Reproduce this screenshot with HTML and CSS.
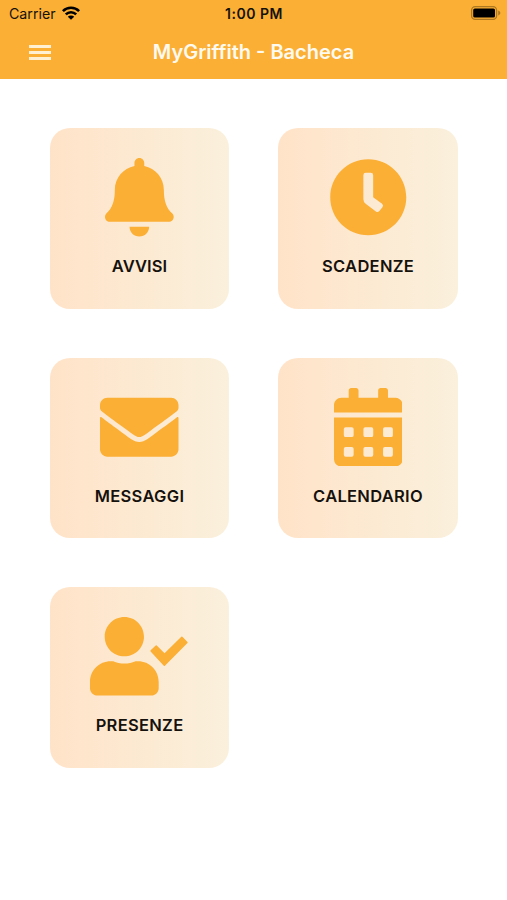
FILE: index.html
```html
<!DOCTYPE html>
<html lang="it">
<head>
<meta charset="utf-8">
<title>MyGriffith - Bacheca</title>
<link rel="stylesheet" href="styles.css">
</head>
<body>
<header class="header">
  <div class="status">
    <div class="carrier">
      <span class="carrier-name">Carrier</span>
      <svg class="wifi" viewBox="0 0 18 14"><g fill="none" stroke="#000" stroke-width="2.6"><path d="M.9 5.1a11.6 11.6 0 0 1 16.2 0"/><path d="M3.8 8.4a7.4 7.4 0 0 1 10.4 0"/></g><path d="M9 13.7 5.8 10.7a4.6 4.6 0 0 1 6.4 0z"/></svg>
    </div>
    <time class="clock">1:00 PM</time>
    <svg class="battery" viewBox="0 0 32 16"><rect x="1.6" y="1.6" width="25" height="12.8" rx="3.6" fill="none" stroke="#ad781f" stroke-width="1.3"/><rect x="3.2" y="3.4" width="21.8" height="9.2" rx="1.6"/><path d="M28.2 5.6c2.8.8 2.8 4 0 4.8z" fill="#ad781f"/></svg>
  </div>
  <div class="toolbar">
    <button class="menu" aria-label="Menu"><span></span><span></span><span></span></button>
    <h1 class="title">MyGriffith - Bacheca</h1>
  </div>
</header>
<main class="grid">
  <a class="card">
    <svg class="icon" viewBox="0 0 448 512"><path d="M224 512c35.32 0 63.97-28.65 63.97-64H160.03c0 35.35 28.65 64 63.97 64zm215.39-149.71c-19.32-20.76-55.47-51.99-55.47-154.29 0-77.7-54.48-139.9-127.94-155.16V32c0-17.67-14.32-32-31.98-32s-31.98 14.33-31.98 32v20.84C118.56 68.1 64.08 130.3 64.08 208c0 102.3-36.15 133.53-55.47 154.29-6 6.45-8.66 14.16-8.61 21.71.11 16.4 12.98 32 32.1 32h383.8c19.12 0 32-15.6 32.1-32 .05-7.55-2.61-15.27-8.61-21.71z"/></svg>
    <span class="label avvisi">AVVISI</span>
  </a>
  <a class="card">
    <svg class="icon" viewBox="0 0 512 512"><path d="M256,8C119,8,8,119,8,256S119,504,256,504,504,393,504,256,393,8,256,8Zm92.49,313h0l-20,25a16,16,0,0,1-22.49,2.5h0l-67-49.72a40,40,0,0,1-15-31.23V112a16,16,0,0,1,16-16h32a16,16,0,0,1,16,16V256l58,42.5A16,16,0,0,1,348.49,321Z"/></svg>
    <span class="label">SCADENZE</span>
  </a>
  <a class="card">
    <svg class="icon" viewBox="0 0 512 512"><path d="M502.3 190.8c3.9-3.1 9.7-.2 9.7 4.7V400c0 26.5-21.5 48-48 48H48c-26.5 0-48-21.5-48-48V195.6c0-5 5.7-7.8 9.7-4.7 22.4 17.4 52.1 39.5 154.1 113.6 21.1 15.4 56.7 47.8 92.2 47.6 35.7.3 72-32.8 92.3-47.6 102-74.1 131.6-96.3 154-113.7zM256 320c23.2.4 56.6-29.2 73.4-41.4 132.7-96.3 142.8-104.7 173.4-128.7 5.8-4.5 9.2-11.5 9.2-18.9v-19c0-26.5-21.5-48-48-48H48c-26.5 0-48 21.5-48 48v19c0 7.4 3.4 14.3 9.2 18.9 30.6 23.9 40.7 32.4 173.4 128.7 16.8 12.2 50.2 41.8 73.4 41.4z"/></svg>
    <span class="label">MESSAGGI</span>
  </a>
  <a class="card">
    <svg class="icon" viewBox="0 0 448 512"><path fill-rule="evenodd" d="M0 464c0 26.5 21.5 48 48 48h352c26.5 0 48-21.5 48-48V192H0zM76 256h40q12 0 12 12v40q0 12-12 12H76q-12 0-12-12v-40q0-12 12-12zm128 0h40q12 0 12 12v40q0 12-12 12h-40q-12 0-12-12v-40q0-12 12-12zm128 0h40q12 0 12 12v40q0 12-12 12h-40q-12 0-12-12v-40q0-12 12-12zM76 384h40q12 0 12 12v40q0 12-12 12H76q-12 0-12-12v-40q0-12 12-12zm128 0h40q12 0 12 12v40q0 12-12 12h-40q-12 0-12-12v-40q0-12 12-12zm128 0h40q12 0 12 12v40q0 12-12 12h-40q-12 0-12-12v-40q0-12 12-12zM400 64h-48V16c0-8.8-7.2-16-16-16h-32c-8.8 0-16 7.2-16 16v48H160V16c0-8.8-7.2-16-16-16h-32c-8.8 0-16 7.2-16 16v48H48C21.5 64 0 85.5 0 112v48h448v-48c0-26.5-21.5-48-48-48z"/></svg>
    <span class="label">CALENDARIO</span>
  </a>
  <a class="card">
    <svg class="icon" viewBox="0 0 640 512"><path d="M224 256c70.7 0 128-57.3 128-128S294.7 0 224 0 96 57.3 96 128s57.3 128 128 128zm89.6 32h-16.7c-22.2 10.2-46.9 16-72.9 16s-50.6-5.8-72.9-16h-16.7C60.2 288 0 348.2 0 422.4V464c0 26.5 21.5 48 48 48h352c26.5 0 48-21.5 48-48v-41.6c0-74.2-60.2-134.4-134.4-134.4z"/><path class="tick" d="M399 221l33-31 54 54 113-112 33 34-147 148z"/></svg>
    <span class="label">PRESENZE</span>
  </a>
</main>
</body>
</html>
```
FILE: styles.css
```css
* {
  box-sizing: border-box;
}

body {
  margin: 0;
  min-height: 900px;
  background: #fff;
  color: #15110d;
  font-family: Inter, "Liberation Sans", sans-serif;
}

.header {
  height: 79px;
  background: #fbaf35;
}

.status {
  display: grid;
  grid-template-columns: 1fr auto 1fr;
  align-items: center;
  height: 26px;
  padding: 0 5px 0 9px;
}

.carrier {
  display: flex;
  align-items: center;
  gap: 6px;
  font-size: 14.2px;
}

.wifi {
  width: 18px;
  height: 14px;
}

.clock {
  margin-left: -3px;
  font-size: 14px;
  font-weight: 600;
  letter-spacing: 0.5px;
}

.battery {
  justify-self: end;
  width: 32px;
  height: 16px;
}

.toolbar {
  display: grid;
  grid-template-columns: 80px 1fr 80px;
  align-items: center;
  height: 52px;
}

.menu {
  display: flex;
  flex-direction: column;
  gap: 3px;
  width: 22px;
  margin-left: 29px;
  padding: 0;
  border: 0;
  background: none;
}

.menu span {
  height: 3px;
  background: #ffefd3;
}

.title {
  margin: 0;
  color: #fffaf0;
  font-size: 20px;
  font-weight: 600;
  text-align: center;
  white-space: nowrap;
}

.grid {
  display: grid;
  grid-template-columns: 179.5px 179.5px;
  gap: 49px;
  padding: 49px 0 0 49.8px;
}

.card {
  display: flex;
  flex-direction: column;
  align-items: center;
  height: 180.5px;
  padding-top: 30px;
  border-radius: 20px;
  background: linear-gradient(90deg, #ffe3c8, #faf0dc);
}

.icon {
  height: 78.5px;
  fill: #fbaf35;
}

.tick {
  stroke: #fbaf35;
  stroke-width: 10;
  stroke-linejoin: round;
}

.label {
  margin-top: 19.5px;
  font-size: 16.5px;
  font-weight: 600;
  letter-spacing: 0.3px;
  line-height: 21px;
}

.avvisi {
  letter-spacing: 0.1px;
}
```
